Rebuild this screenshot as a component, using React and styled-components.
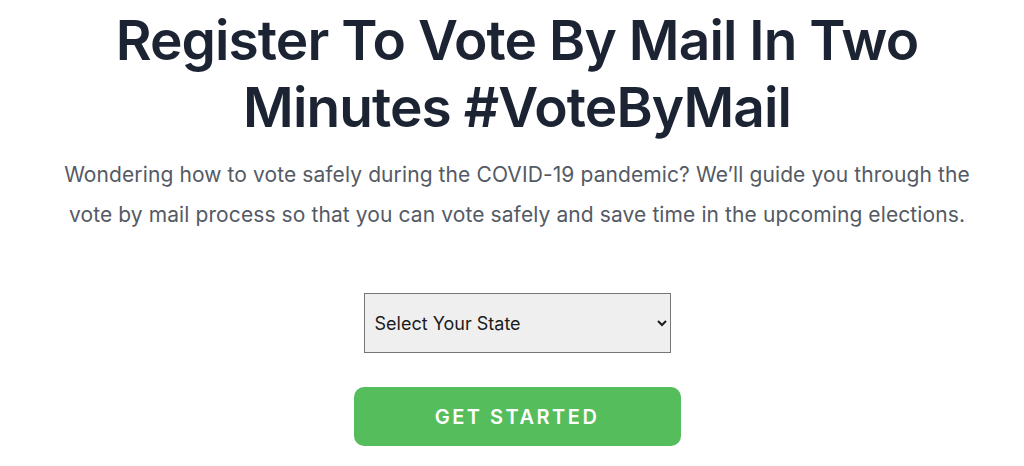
import styled, { createGlobalStyle } from "styled-components";

const GlobalStyle = createGlobalStyle`
  body {
    margin: 0;
    background: #ffffff;
    font-family: Inter, "Noto Sans", sans-serif;
  }
`;

const Page = styled.div`
  width: 1024px;
  height: 466px;
  overflow: hidden;
  display: flex;
  flex-direction: column;
  align-items: center;
  padding: 7px 0 0 10px;
  box-sizing: border-box;
`;

const Title = styled.h1`
  margin: 0;
  width: 880px;
  text-align: center;
  font-size: 55px;
  line-height: 67px;
  font-weight: 600;
  letter-spacing: -0.9px;
  color: #1c2434;
`;

const Lead = styled.p`
  margin: 14px 0 0;
  width: 925px;
  text-align: center;
  font-size: 21px;
  line-height: 40px;
  letter-spacing: 0.1px;
  color: #545a64;
`;

const StateSelect = styled.select`
  margin-top: 58px;
  width: 307px;
  height: 60px;
  padding: 0 6px;
  font-family: Inter, "Noto Sans", sans-serif;
  font-size: 18px;
  color: #1c1c1c;
  background: #efefef;
  border: 1px solid #767676;
  border-radius: 0;
`;

const StartButton = styled.button`
  margin-top: 34px;
  width: 327px;
  height: 59px;
  border: none;
  border-radius: 10px;
  background: #55bd5c;
  color: #ffffff;
  font-family: Inter, "Noto Sans", sans-serif;
  font-size: 20px;
  font-weight: 600;
  letter-spacing: 2.5px;
  cursor: pointer;
`;

export default function App() {
  return (
    <Page>
      <GlobalStyle />
      <Title>Register To Vote By Mail In Two Minutes #VoteByMail</Title>
      <Lead>
        Wondering how to vote safely during the COVID-19 pandemic? We’ll guide
        you through the vote by mail process so that you can vote safely and
        save time in the upcoming elections.
      </Lead>
      <StateSelect defaultValue="">
        <option value="">Select Your State</option>
        <option value="AL">Alabama</option>
        <option value="AK">Alaska</option>
      </StateSelect>
      <StartButton>GET STARTED</StartButton>
    </Page>
  );
}
